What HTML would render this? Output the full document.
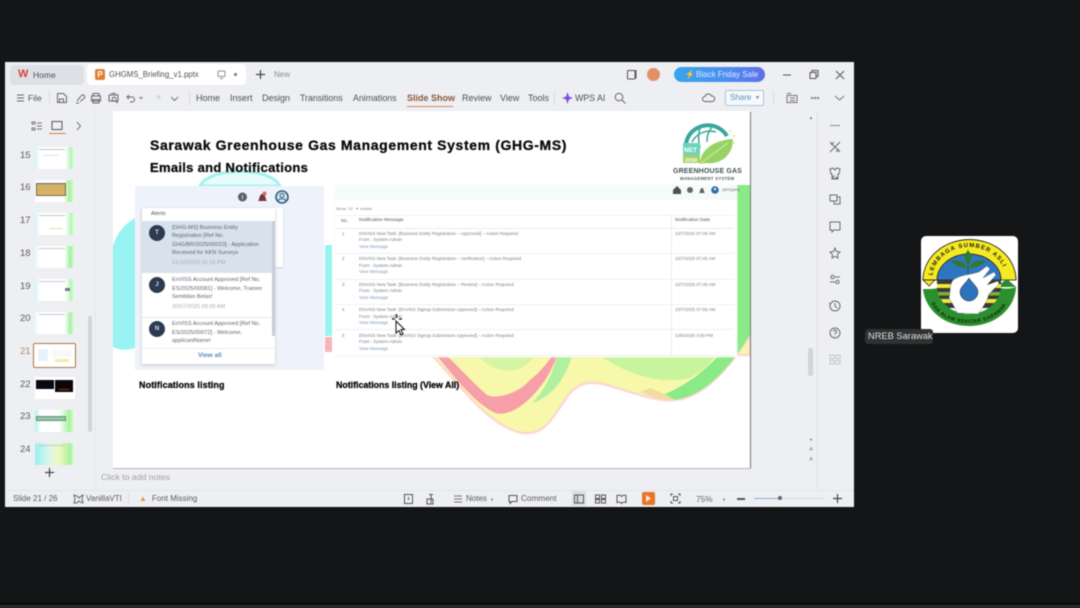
<!DOCTYPE html>
<html><head><meta charset="utf-8"><style>
html,body{margin:0;padding:0;background:#141517}
body{width:1080px;height:608px;overflow:hidden;position:relative;font-family:"Liberation Sans",sans-serif}
.a,.t{position:absolute}
.t{white-space:nowrap;line-height:1;color:#4c5158}
#win{position:absolute;left:0;top:0;width:1080px;height:608px;filter:blur(.45px)}
.tb{font-size:9px;top:94px;color:#4b5058}
.n{font-size:9.5px;color:#5c5c5c;left:20px}
.th{position:absolute;left:35px;width:40px;height:22px;background:linear-gradient(90deg,#cdf5f6 0,#fff 12%,#fff 76%,#b8f2b8 90%,#eefcee 100%);overflow:hidden}
.th i{position:absolute;left:4px;top:2px;width:26px;height:1px;background:#c2caca}
.m{font-size:4.500px;color:#7a7f85}
.b{color:#7c9cc0}
.al{font-size:5.600px;color:#60656d}
.av{position:absolute;left:149px;width:16px;height:16px;border-radius:50%;background:#2d3b50;color:#dde;font-size:6px;line-height:16px;text-align:center;font-weight:bold}
.h{font-weight:bold;color:#0b0b0b;-webkit-text-stroke:.3px #0b0b0b}
svg{position:absolute;overflow:visible}
</style></head><body>
<div id="win">
<div class="a" style="left:0;top:603px;width:1080px;height:1px;background:#000"></div>
<div class="a" style="left:0;top:605px;width:1080px;height:3px;background:#2a2b2b"></div>

<!-- window -->
<div class="a" style="left:5px;top:62px;width:849px;height:445px;background:#eeeff3"></div>

<!-- tabs -->
<div class="a" style="left:10px;top:65px;width:74px;height:20px;background:#dfe0e5;border-radius:4px"></div>
<div class="t" style="left:18px;top:69px;font-size:11px;font-weight:bold;color:#d8413c">W</div>
<div class="t" style="left:33px;top:71px;font-size:8.500px">Home</div>
<div class="a" style="left:87px;top:64px;width:159px;height:21px;background:#fff;border-radius:4px"></div>
<div class="a" style="left:95px;top:69px;width:10px;height:11px;background:#e07f35;border-radius:2px;color:#fff;font-size:8px;line-height:11px;text-align:center;font-weight:bold">P</div>
<div class="t" style="left:109px;top:71px;font-size:7.800px">GHGMS_Briefing_v1.pptx</div>
<svg style="left:217px;top:70px" width="10" height="10" fill="none" stroke="#8a8e96"><rect x="1" y="1" width="7" height="5.500" rx="1"/><path d="M3 8.500h3"/></svg>
<div class="a" style="left:234px;top:73px;width:3px;height:3px;border-radius:50%;background:#777"></div>
<svg style="left:255px;top:69px" width="11" height="11" stroke="#444" stroke-width="1.200"><path d="M5.500 1v9M1 5.500h9"/></svg>
<div class="t" style="left:274px;top:71px;font-size:8px;color:#8a8e96">New</div>

<svg style="left:626px;top:69px" width="11" height="11" fill="none" stroke="#555"><rect x="1.500" y="1.500" width="7.500" height="8.500" rx="1"/><path d="M9 1.500h1v8"/></svg>
<div class="a" style="left:647px;top:68px;width:13px;height:13px;border-radius:50%;background:#e49066"></div>
<div class="a" style="left:674px;top:67px;width:91px;height:15px;border-radius:8px;background:linear-gradient(90deg,#37a5ee,#4d8cf0 60%,#5f6fe8)"></div>
<div class="t" style="left:685px;top:71px;font-size:8px;color:#e8f2ff">&#9889;</div>
<div class="t" style="left:696px;top:71px;font-size:8px;color:#dfeaff">Black Friday Sale</div>
<svg style="left:782px;top:69px" width="62" height="12" fill="none" stroke="#555"><path d="M1 6h8M28 3.500h6v6h-6zM30 3.500v-2h6v6h-2M54 2l8 8M62 2l-8 8"/></svg>

<!-- toolbar -->
<svg style="left:16px;top:93px" width="10" height="10" stroke="#666"><path d="M1 2h7M1 5h7M1 8h7"/></svg>
<div class="t" style="left:28px;top:94px;font-size:8.500px">File</div>
<div class="a" style="left:49px;top:91px;width:1px;height:14px;background:#dcdde1"></div>
<svg style="left:56px;top:92px" width="125" height="13" fill="none" stroke="#666"><path d="M1.500 1.500h6l3 3v6h-9zM3.500 7h4v3.500h-4z"/><path d="M21 9l4-5a2 2 0 1 1 3 2.500l-4 3M20 11h3"/><path d="M37 4V1.500h6V4M35.500 4h9v5h-9zM37 7.500h6v3.500h-6z"/><path d="M53 3h9v6h-9zM55 1.500h5M60 8a2 2 0 1 0-1 1l3 2"/><path d="M73 3l-2 2 2 2M71 5h5a2.500 2.500 0 0 1 0 5h-2"/><path d="M83.500 5l1.500 1.500L86.500 5" stroke="#777"/><path d="M102 3l2 2-2 2M104 5h-4" stroke="#c8cacf"/><path d="M115 5l3.500 3.500L122 5" stroke="#777"/></svg>
<div class="a" style="left:189px;top:91px;width:1px;height:14px;background:#dcdde1"></div>
<div class="t tb" style="left:196px">Home</div>
<div class="t tb" style="left:230px">Insert</div>
<div class="t tb" style="left:262px">Design</div>
<div class="t tb" style="left:300px;font-size:8.800px">Transitions</div>
<div class="t tb" style="left:353px;font-size:8.800px">Animations</div>
<div class="t tb" style="left:407px;font-weight:bold;color:#8a5a3a">Slide Show</div>
<div class="a" style="left:407px;top:106px;width:46px;height:1px;background:#cf8c66"></div>
<div class="t tb" style="left:462px">Review</div>
<div class="t tb" style="left:500px">View</div>
<div class="t tb" style="left:528px">Tools</div>
<div class="a" style="left:554px;top:91px;width:1px;height:14px;background:#dcdde1"></div>
<svg style="left:562px;top:92px" width="11" height="12" fill="#7d52d8"><path d="M5.500 0l1.500 4.500L11 6 7 7.500 5.500 12 4 7.500 0 6l4-1.500z"/></svg>
<div class="t tb" style="left:575px;font-size:8.800px">WPS AI</div>
<svg style="left:614px;top:92px" width="12" height="12" fill="none" stroke="#666"><circle cx="5" cy="5" r="3.800"/><path d="M8 8l3.500 3.500"/></svg>
<svg style="left:702px;top:92px" width="13" height="12" fill="none" stroke="#666"><path d="M3 9.500a2.500 2.500 0 0 1 0-5 3.500 3.500 0 0 1 6.500-.5 2.800 2.800 0 0 1 1 5.500z"/></svg>
<div class="a" style="left:725px;top:90px;width:37px;height:14px;border:1px solid #a9c6de;border-radius:2px;background:#f6f8fb"></div>
<div class="t" style="left:730px;top:94px;font-size:8px;color:#5b93bd">Share</div>
<div class="t" style="left:755px;top:96px;font-size:5px;color:#777">&#9660;</div>
<div class="a" style="left:773px;top:91px;width:1px;height:14px;background:#dcdde1"></div>
<svg style="left:785px;top:92px" width="60" height="12" fill="none" stroke="#777"><path d="M2 3.500h10v7H2zM2 1.500h4M5 6h5M5 8.500h5"/><circle cx="27" cy="6" r=".6" fill="#555"/><circle cx="30" cy="6" r=".6" fill="#555"/><circle cx="33" cy="6" r=".6" fill="#555"/><path d="M50 4l4.500 4L59 4"/></svg>

<!-- left panel -->
<svg style="left:31px;top:120px" width="60" height="13" fill="none" stroke="#777"><path d="M1 2h3v2H1zM1 8h3v2H1zM6 3h5M6 9h5M6 6h5"/><rect x="21" y="1.500" width="10" height="8" stroke="#555"/><path d="M46 2l3.500 4L46 10"/></svg>
<div class="a" style="left:49px;top:133px;width:17px;height:1px;background:#cf7f5a"></div>
<div class="a" style="left:95px;top:110px;width:1px;height:380px;background:#e6e7ea"></div>

<div class="t n" style="top:151px">15</div><div class="th" style="top:147px"><i></i><i style="left:8px;top:8px;width:16px;background:#dde"></i></div>
<div class="t n" style="top:183px">16</div><div class="th" style="top:180px;background:linear-gradient(90deg,#fff 72%,#a8f09c 86%,#eefcee)"><i style="left:1px;top:3px;width:28px;height:11px;background:linear-gradient(#cdb070,#e0b45a);border:1px solid #6b6b58"></i></div>
<div class="t n" style="top:216px">17</div><div class="th" style="top:213px"><i></i><i style="left:14px;top:15px;width:14px;height:1px;background:#e3e09a"></i></div>
<div class="t n" style="top:249px">18</div><div class="th" style="top:246px;background:linear-gradient(90deg,#def9fa,#fff 12%,#fff 74%,#a0f0a0 88%,#eefcee)"><i></i></div>
<div class="t n" style="top:282px">19</div><div class="th" style="top:279px"><i></i><i style="left:30px;top:9px;width:5px;height:3px;background:#778"></i></div>
<div class="t n" style="top:314px">20</div><div class="th" style="top:312px;background:linear-gradient(90deg,#eafcfc,#fff 12%,#fff 74%,#a8f0a8 88%,#eefcee)"><i></i></div>
<div class="t n" style="top:347px;color:#b5885f">21</div>
<div class="a" style="left:33px;top:343px;width:41px;height:23px;border:1.500px solid #a9744a;border-radius:2px;background:#fff"></div>
<div class="a" style="left:38px;top:349px;width:10px;height:12px;background:#e8f1fa"></div>
<div class="a" style="left:52px;top:349px;width:20px;height:8px;background:#f8f8f8"></div>
<div class="a" style="left:55px;top:359px;width:14px;height:3px;background:#eeeca8"></div>
<div class="t n" style="top:380px">22</div><div class="th" style="top:377px;background:#fff"><i style="left:1px;top:3px;width:18px;height:9px;background:#06090f"></i><i style="left:20px;top:3px;width:18px;height:12px;background:#0b0808"></i><i style="left:24px;top:12px;width:10px;height:1px;background:#a33"></i></div>
<div class="t n" style="top:412px">23</div><div class="th" style="top:410px;background:linear-gradient(90deg,#b0f0f2,#fff 14%,#fff 60%,#a8f0a0 86%,#eefcee)"><i style="left:1px;top:6px;width:28px;height:3px;background:#9cc2b0;border:1px solid #596"></i></div>
<div class="t n" style="top:445px">24</div><div class="th" style="top:443px;background:linear-gradient(90deg,#9aeff2,#d8f7ec 35%,#f2f8c0 60%,#a8f0a0 88%,#eefcee)"><i></i></div>
<div class="a" style="left:88px;top:316px;width:4px;height:116px;background:#d3d4d8;border-radius:2px"></div>
<svg style="left:44px;top:467px" width="11" height="11" stroke="#444" stroke-width="1.200"><path d="M5.500 1v9M1 5.500h9"/></svg>

<!-- slide -->
<div class="a" style="left:113px;top:111px;width:637px;height:357px;background:#fff;overflow:hidden">
 <svg style="left:0;top:0" width="637" height="357" viewBox="113 111 637 357">
  <path d="M113 246Q118 228 135 218V348Q122 352 113 347Z" fill="#9af3f3"/>
  <path d="M200 186C208 168 268 165 280 186Z" fill="#e8fbfb" stroke="#a6f1ef" stroke-width="3"/>
  <path d="M325 245H332V336H325Z" fill="#9af3f3"/>
  <path d="M325 337H332V352H325Z" fill="#f7b5ba"/>
  <path d="M432 355C460 385 490 428 523 433C548 436 556 410 570 393C580 382 592 380 610 386C640 395 660 402 675 400C700 398 725 375 750 335V355Z" fill="#f8f8aa" stroke="#fbd9d0" stroke-width="2.500"/>
  <path d="M478 356C495 374 520 377 535 356Z" fill="#d5f5a4"/>
  <path d="M437 356C455 378 472 400 493 412C505 418 525 408 543 383C549 375 553 366 557 356H552C545 366 538 374 530 380C520 392 498 400 487 395C472 382 460 368 447 356Z" fill="#f79fa9"/>
  <path d="M557 356H572C565 380 550 398 532 403C545 390 552 375 557 356Z" fill="#b0f0a0"/>
  <path d="M600 356C630 375 660 385 690 378C700 372 710 365 715 356Z" fill="#c8f49e"/>
  <path d="M660 396C690 385 710 365 718 356H737V185H750V335C725 375 700 398 672 400Z" fill="#8aea88"/>
  <path d="M640 392C650 396 660 400 675 400L665 394 650 388Z" fill="#f0dda0"/>
 </svg>
</div>
<div class="a" style="left:750px;top:112px;width:1px;height:357px;background:#777"></div>
<div class="a" style="left:113px;top:468px;width:638px;height:1px;background:#b5b5b5"></div>

<div class="t h" style="left:150px;top:138px;font-size:14px;letter-spacing:.62px">Sarawak Greenhouse Gas Management System (GHG-MS)</div>
<div class="t h" style="left:150px;top:161px;font-size:13px;letter-spacing:.3px">Emails and Notifications</div>

<!-- GHG logo -->
<svg style="left:680px;top:122px" width="60" height="44" fill="none">
 <path d="M6 22C8 8 22 1 34 4C40 6 44 9 47 14" stroke="#3aa79a" stroke-width="4"/>
 <path d="M12 20C16 12 26 7 36 10M20 6C18 12 18 18 20 26M32 5C28 10 27 14 27 20" stroke="#3aa79a" stroke-width="1.500"/>
 <path d="M20 42C20 28 34 18 53 17C53 32 42 43 26 41Z" fill="#98d264"/>
 <path d="M21 41C30 34 38 28 48 21" stroke="#d6f0a8"/>
 <rect x="3" y="21" width="17" height="20" fill="#6dd3bd"/>
 <text x="4" y="30" font-size="6.500" font-weight="bold" fill="#fff" font-family="Liberation Sans">NET</text>
 <rect x="3" y="33" width="17" height="8" fill="#a4d062"/>
 <text x="5" y="40" font-size="5.500" font-weight="bold" fill="#fff" font-family="Liberation Sans">2050</text>
 <circle cx="50" cy="9" r=".8" fill="#d8c860"/><circle cx="54" cy="14" r=".8" fill="#d8c860"/><circle cx="54" cy="21" r=".8" fill="#d8c860"/><circle cx="51" cy="27" r=".8" fill="#d8c860"/>
</svg>
<div class="t" style="left:673px;top:168px;font-size:7px;font-weight:bold;color:#3d5358;letter-spacing:.15px">GREENHOUSE GAS</div>
<div class="t" style="left:680px;top:177px;font-size:4.300px;font-weight:bold;color:#4d5f62;letter-spacing:.25px">MANAGEMENT SYSTEM</div>

<!-- alerts panel -->
<div class="a" style="left:135px;top:186px;width:189px;height:184px;background:#eef3fb"></div>
<div class="a" style="left:142px;top:208px;width:141px;height:59px;background:#fff;box-shadow:0 1px 2px #ccd"></div>
<div class="a" style="left:142px;top:208px;width:133px;height:156px;background:#fff;box-shadow:0 1px 3px #c4c4c4"></div>
<svg style="left:236px;top:189px" width="54" height="16"><circle cx="6.500" cy="8" r="4.500" fill="#5a5f66"/><rect x="6" y="6" width="1" height="4" fill="#ddd"/><path d="M22 12c2-2 1-7 4.500-7s2.500 5 4.500 7z" fill="#7c3340"/><circle cx="28.500" cy="4.500" r="2" fill="#d5667a"/><circle cx="46" cy="8" r="6" fill="#dbe7f2" stroke="#315f80" stroke-width="1.600"/><circle cx="46" cy="6.500" r="2" fill="none" stroke="#315f80"/><path d="M42 12c1-3 7-3 8 0" fill="none" stroke="#315f80"/></svg>
<div class="t" style="left:151px;top:212px;font-size:5.800px;color:#555">Alerts</div>
<div class="a" style="left:142px;top:221px;width:130px;height:52px;background:#d8e2ec"></div>
<div class="a" style="left:272px;top:221px;width:3px;height:115px;background:#c9ced6"></div>
<div class="a" style="left:142px;top:317px;width:130px;height:1px;background:#e4e6ea"></div>
<div class="a" style="left:142px;top:348px;width:133px;height:1px;background:#eee"></div>
<div class="av" style="top:225px">T</div><div class="av" style="top:277px">J</div><div class="av" style="top:321px">N</div>
<div class="t al" style="left:172px;top:226px">[GHG-MS] Business Entity</div>
<div class="t al" style="left:172px;top:234px">Registration [Ref No.</div>
<div class="t al" style="left:172px;top:243px">GHG/BR/2025/00023] - Application</div>
<div class="t al" style="left:172px;top:251px">Received for KKN Surveys</div>
<div class="t al" style="left:172px;top:261px;color:#a4acb5">21/10/2025 02:19 PM</div>
<div class="t al" style="left:172px;top:278px">EnVISS Account Approved [Ref No.</div>
<div class="t al" style="left:172px;top:287px">ES/2025/00081] - Welcome, Trainee</div>
<div class="t al" style="left:172px;top:295px">Sembilan Belas!</div>
<div class="t al" style="left:172px;top:305px;color:#a8acb2">30/07/2025 09:09 AM</div>
<div class="t al" style="left:172px;top:322px">EnVISS Account Approved [Ref No.</div>
<div class="t al" style="left:172px;top:331px">ES/2025/00072] - Welcome,</div>
<div class="t al" style="left:172px;top:339px">applicantName!</div>
<div class="t" style="left:198px;top:353px;font-size:6.500px;font-weight:bold;color:#5d8fb0">View all</div>
<div class="t h" style="left:139px;top:381px;font-size:9px;letter-spacing:.1px">Notifications listing</div>

<!-- table panel -->
<div class="a" style="left:335px;top:185px;width:402px;height:172px;background:#fff;box-shadow:0 0 2px #eefbe8"></div>
<div class="a" style="left:335px;top:185px;width:402px;height:15px;background:#f5fbf8"></div>
<svg style="left:672px;top:185px" width="50" height="10"><path d="M1 5l4-4 4 4v4H1z" fill="#4b5157"/><circle cx="18" cy="5" r="3" fill="#666"/><path d="M27 8c1.500-1 1-5 3-5s1.500 4 3 5z" fill="#5b6067"/><circle cx="43" cy="5" r="3.800" fill="#2d6ea5"/><circle cx="43" cy="4" r="1.300" fill="#dde"/></svg>
<div class="t" style="left:722px;top:188px;font-size:4px;color:#667">(AFIQAH)</div>
<div class="t m" style="left:336px;top:207px;font-size:4px">Show&nbsp;&nbsp;10&nbsp;&nbsp;&nbsp;&#9662;&nbsp;&nbsp;entries</div>
<div class="a" style="left:336px;top:215px;width:398px;height:1px;background:#f0f1f3"></div>
<div class="a" style="left:336px;top:228px;width:398px;height:1px;background:#ebecef"></div>
<div class="a" style="left:336px;top:253px;width:398px;height:1px;background:#eff0f2"></div>
<div class="a" style="left:336px;top:279px;width:398px;height:1px;background:#eff0f2"></div>
<div class="a" style="left:336px;top:304px;width:398px;height:1px;background:#eff0f2"></div>
<div class="a" style="left:336px;top:329px;width:398px;height:1px;background:#eff0f2"></div>
<div class="a" style="left:336px;top:355px;width:398px;height:1px;background:#eff0f2"></div>
<div class="a" style="left:671px;top:215px;width:1px;height:140px;background:#eceef0"></div>
<div class="t m" style="left:341px;top:219px;color:#555">No.</div>
<div class="t m" style="left:359px;top:219px;color:#555;font-size:4.800px">Notification Message</div>
<div class="t m" style="left:675px;top:219px;color:#555;font-size:4.800px">Notification Date</div>

<div class="t m" style="left:342px;top:232px">1</div><div class="t m" style="left:359px;top:232px">ENVISS New Task: [Business Entity Registration &ndash; Approved] &ndash; Action Required</div><div class="t m" style="left:359px;top:238px">From : System Admin</div><div class="t m b" style="left:359px;top:245px">View Message</div><div class="t m" style="left:675px;top:232px">10/7/2025 07:49 AM</div>
<div class="t m" style="left:342px;top:257px">2</div><div class="t m" style="left:359px;top:257px">ENVISS New Task: [Business Entity Registration &ndash; Verification] &ndash; Action Required</div><div class="t m" style="left:359px;top:264px">From : System Admin</div><div class="t m b" style="left:359px;top:270px">View Message</div><div class="t m" style="left:675px;top:257px">10/7/2025 07:49 AM</div>
<div class="t m" style="left:342px;top:283px">3</div><div class="t m" style="left:359px;top:283px">ENVISS New Task: [Business Entity Registration &ndash; Review] &ndash; Action Required</div><div class="t m" style="left:359px;top:289px">From : System Admin</div><div class="t m b" style="left:359px;top:296px">View Message</div><div class="t m" style="left:675px;top:283px">10/7/2025 07:49 AM</div>
<div class="t m" style="left:342px;top:308px">4</div><div class="t m" style="left:359px;top:308px">ENVISS New Task: [EnVISS Signup Submission Approved] &ndash; Action Required</div><div class="t m" style="left:359px;top:315px">From : System Admin</div><div class="t m b" style="left:359px;top:321px">View Message</div><div class="t m" style="left:675px;top:308px">10/7/2025 07:59 AM</div>
<div class="t m" style="left:342px;top:334px">5</div><div class="t m" style="left:359px;top:334px">ENVISS New Task: [EnVISS Signup Submission Approved] &ndash; Action Required</div><div class="t m" style="left:359px;top:340px">From : System Admin</div><div class="t m b" style="left:359px;top:347px">View Message</div><div class="t m" style="left:675px;top:334px">10/6/2025 3:59 PM</div>

<!-- cursor -->
<svg style="left:390px;top:314px" width="18" height="22"><path d="M6 7L6 19L9 16.500L11 21L13 20L11 15.500L14.500 15.500Z" fill="#fff" stroke="#111"/><path d="M6.500 0v4M2 5h3M9 5h3" stroke="#111" stroke-width="1.300"/></svg>
<div class="t h" style="left:336px;top:381px;font-size:8.800px">Notifications listing (View All)</div>

<!-- scroll + right rail -->
<div class="t" style="left:809px;top:116px;font-size:4px;color:#666">&#9650;</div>
<div class="a" style="left:808px;top:348px;width:5px;height:28px;background:#d3d4d8;border-radius:2px"></div>
<div class="t" style="left:809px;top:438px;font-size:4px;color:#666">&#9660;</div>
<div class="t" style="left:809px;top:448px;font-size:5px;color:#666">&#8793;</div>
<div class="t" style="left:809px;top:458px;font-size:5px;color:#666">&#8793;</div>
<div class="a" style="left:817px;top:110px;width:1px;height:380px;background:#e2e3e7"></div>
<svg style="left:828px;top:120px" width="14" height="245" fill="none" stroke="#6c6c6c">
 <path d="M2 5.500h10" stroke="#888"/>
 <path d="M2 22l10 10M12 22l-10 10M3 25l3-3M8 32l3-3"/>
 <path d="M2 49l3-1 2 2 2-2 3 1-1 5h-1v5H4v-5H3zM7 56a1.500 1.500 0 1 0 1 1l2 2"/>
 <path d="M2 75h7v6H2zM6 81v3h6v-7h-3"/>
 <path d="M2 102h10v8H6l-2 2v-2H2z"/>
 <path d="M7 128l1.500 3.500 3.500.5-2.500 2.500.5 3.500-3-1.700-3 1.700.5-3.500L2 132l3.500-.5z"/>
 <circle cx="4.500" cy="157" r="1.700"/><path d="M7 157h5M2 162h5"/><circle cx="9.500" cy="162" r="1.700"/>
 <circle cx="7" cy="186" r="5"/><path d="M7 183v3l2 2M1 183l1.500 1"/>
 <circle cx="7" cy="213" r="5"/><path d="M5.500 211.500a1.500 1.500 0 1 1 2 1.500l-.5 1v.5M7 216v.5"/>
 <path d="M2 235h4v3.500H2zM8 235h4v3.500H8zM2 240.500h4v3.500H2zM8 240.500h4v3.500H8z" stroke="#c4c6cc"/>
</svg>

<!-- notes -->
<div class="t" style="left:101px;top:473px;font-size:8.700px;color:#a0a0a0">Click to add notes</div>
<div class="a" style="left:5px;top:490px;width:849px;height:1px;background:#e4e5e8"></div>

<!-- status -->
<div class="t" style="left:13px;top:495px;font-size:8px;color:#5c5c5c">Slide 21 / 26</div>
<svg style="left:73px;top:494px" width="11" height="10" fill="none" stroke="#666"><path d="M1 1l3 1 2 2 2-2 2-1-1 4 1 4-3-1-1-1-2 2-3 0 1-4z"/></svg>
<div class="t" style="left:86px;top:495px;font-size:8px;color:#5c5c5c">VanillaVTI</div>
<div class="a" style="left:128px;top:492px;width:1px;height:12px;background:#e2d8d8"></div>
<div class="t" style="left:139px;top:495px;font-size:8px;color:#dca03c">&#9650;</div>
<div class="t" style="left:152px;top:495px;font-size:8px;color:#5c5c5c">Font Missing</div>
<svg style="left:403px;top:493px" width="35" height="12" fill="none" stroke="#555"><path d="M1.500 1.500h8v9h-8zM5.500 4v3M30 1.500h-4M28 1v9M24 6h6v5h-6z"/></svg>
<svg style="left:453px;top:494px" width="10" height="10" stroke="#777"><path d="M1 2h8M1 5h8M1 8h8"/></svg>
<div class="t" style="left:466px;top:495px;font-size:8px;color:#5c5c5c">Notes</div>
<div class="t" style="left:490px;top:498px;font-size:4px;color:#666">&#9660;</div>
<svg style="left:508px;top:494px" width="10" height="10" fill="none" stroke="#555"><path d="M1 1.500h8v6H4l-2 2v-2H1z"/></svg>
<div class="t" style="left:521px;top:495px;font-size:8.200px;color:#5c5c5c">Comment</div>
<div class="a" style="left:572px;top:491px;width:14px;height:15px;background:#dddee2"></div>
<svg style="left:574px;top:494px" width="60" height="10" fill="none" stroke="#555"><path d="M0.500 1h9v8h-9zM3.500 1v8M21.500 1h4v3.500h-4zM27.500 1h4v3.500h-4zM21.500 5.500h4V9h-4zM27.500 5.500h4V9h-4zM43 1.500c2-1 4 0 4.500 1 .5-1 2.500-2 4.500-1v7c-2-1-4 0-4.500 1-.5-1-2.500-2-4.500-1z"/></svg>
<div class="a" style="left:642px;top:492px;width:13px;height:13px;background:#e8752c;border-radius:2px"></div>
<svg style="left:645px;top:495px" width="7" height="7"><path d="M1 0l5 3.500-5 3.500z" fill="#ffe8c8"/></svg>
<svg style="left:670px;top:493px" width="11" height="11" fill="none" stroke="#555"><path d="M1 3V1h2M8 1h2v2M10 8v2H8M3 10H1V8"/><rect x="3.500" y="3.500" width="4" height="4"/></svg>
<div class="t" style="left:696px;top:495px;font-size:8.300px;color:#666">75%</div>
<div class="t" style="left:722px;top:498px;font-size:4px;color:#666">&#9660;</div>
<div class="a" style="left:737px;top:498px;width:8px;height:1.500px;background:#555"></div>
<div class="a" style="left:754px;top:498px;width:70px;height:1px;background:#d6d8dc"></div>
<div class="a" style="left:754px;top:498px;width:25px;height:1px;background:#8ab0cc"></div>
<div class="a" style="left:778px;top:496px;width:4px;height:4px;background:#666;border-radius:50%"></div>
<svg style="left:833px;top:494px" width="9" height="9" stroke="#444" stroke-width="1.200"><path d="M4.500 0v9M0 4.500h9"/></svg>

<!-- NREB logo -->
<div class="a" style="left:921px;top:236px;width:97px;height:97px;background:#fff;border-radius:5px"></div>
<svg style="left:921px;top:236px" width="97" height="97" viewBox="0 0 97 97">
 <defs>
  <path id="arcT" d="M11 44A37 33 0 0 1 85 44"/>
  <path id="arcB" d="M9 60A39 27 0 0 0 87 60"/>
 </defs>
 <path d="M2 44A46 40 0 0 1 95 44Z" fill="#f5ea21" stroke="#111" stroke-width=".8"/>
 <path d="M16 44A32 26 0 0 1 80 44Z" fill="#2f76c0" stroke="#111" stroke-width=".7"/>
 <path d="M2 44H14L8 50Z" fill="#f5ea21" stroke="#111" stroke-width=".7"/>
 <path d="M75 51L86 43L95 51Z" fill="#2b8a2e"/>
 <rect x="16" y="44" width="64" height="28" fill="#3a3a3a"/>
 <rect x="16" y="48" width="64" height="4" fill="#eee93a"/>
 <rect x="16" y="56" width="64" height="3.500" fill="#78b533"/>
 <rect x="16" y="63" width="64" height="4" fill="#eee93a"/>
 <path d="M2 53C9 53 14 53 16 52C17 65 30 78 48 78C66 78 79 65 80 52C84 53 90 53 95 51C94 73 74 90 48 90C22 90 4 73 2 53Z" fill="#2c8f2d"/>
 <path d="M32 44C38 40 44 39 50 38L58 36L66 30L69 33L62 42L73 36L75 39L66 49L77 45L78 48L68 58C66 66 60 74 57 78L36 77C34 72 33 70 28 62C30 54 28 50 32 44Z" fill="#fff" stroke="#333" stroke-width=".3"/>
 <path d="M48 42C52 48 57 51 57 56A9 9 0 0 1 39 56C39 51 44 48 48 42Z" fill="#2c73bd" stroke="#222" stroke-width=".5"/>
 <path d="M47 38V14" stroke="#225c22" stroke-width="1"/>
 <path d="M47 15C43 17 42 23 47 29C52 23 51 17 47 15Z" fill="#2f7a31"/>
 <path d="M45 32C38 32 32 28 30 25C38 23 44 26 46 32Z" fill="#2f7a31"/>
 <path d="M49 32C56 32 62 28 65 25C56 23 51 26 48 32Z" fill="#2f7a31"/>
 <text font-size="6" font-weight="bold" fill="#1a1a1a" font-family="Liberation Sans" letter-spacing="1.050"><textPath href="#arcT" startOffset="4%">LEMBAGA SUMBER ASLI</textPath></text>
 <text font-size="5" font-weight="bold" fill="#10240c" font-family="Liberation Sans" letter-spacing=".5"><textPath href="#arcB" startOffset="7%">DAN ALAM SEKITAR SARAWAK</textPath></text>
</svg>
<div class="a" style="left:865px;top:329px;width:68px;height:15px;background:#303132;border-radius:3px"></div>
<div class="t" style="left:868px;top:332px;font-size:9.300px;color:#dfe0e0">NREB Sarawak</div>
</div>
</body></html>
